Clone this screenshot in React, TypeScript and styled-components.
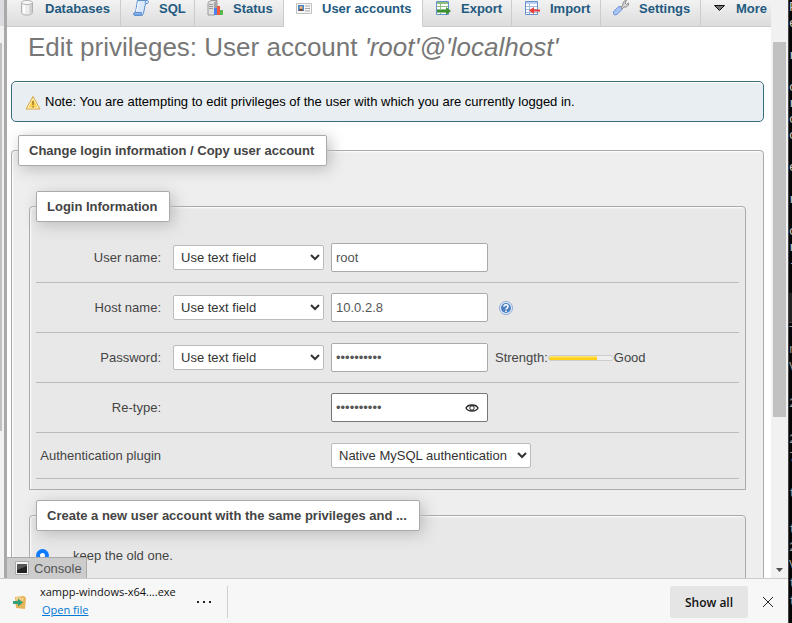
import React from "react";
import styled, { createGlobalStyle, css } from "styled-components";

const GlobalStyle = createGlobalStyle`
  *, *::before, *::after { box-sizing: border-box; }
  body {
    margin: 0;
    overflow: hidden;
    background: #000;
    font-family: "Liberation Sans", Arial, sans-serif;
    font-size: 13px;
    line-height: 17px;
    color: #444;
  }
  button, input, select { font: inherit; color: inherit; margin: 0; }
`;

const Screen = styled.div`
  display: grid;
  grid-template-columns: minmax(0, 1fr) 4px;
  height: 100vh;
`;

const Browser = styled.div`
  display: flex;
  flex-direction: column;
  min-width: 0;
  min-height: 0;
  background: #fff;
`;

const Viewport = styled.div`
  position: relative;
  flex: 1;
  display: grid;
  grid-template-columns: 4px 3px minmax(0, 1fr) 17px;
  min-height: 0;
`;

const NavEdge = styled.div`
  display: grid;
  grid-template-columns: 2px 2px;
  grid-template-rows: 26px 17px 388px;
  background: #f1f1f1;
`;

const NavTop = styled.div`
  grid-column: 1 / 3;
  background: #dcdce0;
`;

const NavThumb = styled.div`
  grid-row: 3;
  background: #c1c1c1;
`;

const Divider = styled.div`
  background: #a9a9a9;
`;

const Content = styled.main`
  min-width: 0;
  overflow: hidden;
`;

const Scrollbar = styled.div`
  display: flex;
  flex-direction: column;
  align-items: center;
  padding-top: 42px;
  background: #f1f1f1;
`;

const ScrollThumb = styled.div`
  width: 13px;
  height: 375px;
  background: #c1c1c1;
`;

const ScrollArrow = styled.svg`
  margin-top: auto;
  margin-bottom: 6px;
`;

const TabBar = styled.nav`
  display: grid;
  grid-template-columns: 114px 74px 89px 139px 89px 89px 100px 1fr;
  height: 27px;
  overflow: hidden;
`;

const Tab = styled.a<{ $active?: boolean }>`
  display: flex;
  gap: 10px;
  padding-left: 12px;
  border-right: 1px solid #ccc;
  border-bottom: 1px solid #ccc;
  background: linear-gradient(#f2f2f2, #dcdcdc);
  color: #235a81;
  font-weight: bold;
  text-decoration: none;
  white-space: nowrap;
  &:last-child { border-right: 0; }
  ${(p) => p.$active && css`
    border-bottom-color: #fff;
    background: #fff;
  `}
`;

const Title = styled.h2`
  margin: 5px 0 0 21px;
  font-size: 26px;
  line-height: 30px;
  font-weight: normal;
  color: #777;
  white-space: nowrap;
`;

const Notice = styled.div`
  display: flex;
  align-items: center;
  gap: 4px;
  height: 41px;
  margin: 19px 7px 13px 4px;
  padding: 0 13px;
  border: 1px solid #3a6c7e;
  border-radius: 5px;
  background: #e8eef1;
  box-shadow: 0 1px 1px #fff inset;
  color: #000;
`;

const Fieldset = styled.fieldset<{ $nested?: boolean; $tall?: boolean }>`
  min-width: 0;
  margin: 0 7px 0 4px;
  padding: 0 6px 10px;
  border: 1px solid #aaa;
  border-radius: 4px 4px 0 0;
  background: #eee;
  box-shadow: 1px 1px 2px #fff inset;
  ${(p) => p.$nested && css`
    margin: 0 11px 10px;
    background: #e8e8e8;
  `}
  ${(p) => p.$tall && css`
    min-height: 160px;
  `}
`;

const Legend = styled.legend<{ $gap: number }>`
  margin-bottom: ${(p) => p.$gap}px;
  padding: 6px 12px 6px 10px;
  border: 1px solid #aaa;
  border-radius: 2px;
  background: #fff;
  box-shadow: 3px 3px 15px #bbb;
  font-weight: bold;
  white-space: nowrap;
`;

const Row = styled.div`
  display: grid;
  grid-template-columns: 130px 151px 157px 1fr;
  column-gap: 7px;
  align-items: center;
  padding: 10px 0;
  border-bottom: 1px solid #bbb;
`;

const Label = styled.label`
  padding-right: 5px;
  text-align: right;
  white-space: nowrap;
`;

const SelectBox = styled.span<{ $wide?: boolean }>`
  position: relative;
  display: block;
  ${(p) => p.$wide && css`
    grid-column: 3 / 5;
    width: 200px;
  `}
`;

const Select = styled.select`
  display: block;
  width: 100%;
  height: 25px;
  padding: 0 20px 0 7px;
  border: 1px solid #bbb;
  border-radius: 2px;
  background: #fff;
  color: #333;
  appearance: none;
`;

const Chevron = styled.svg`
  position: absolute;
  top: 9px;
  right: 4px;
  pointer-events: none;
`;

const InputBox = styled.span`
  position: relative;
  display: block;
  grid-column: 3;
`;

const Input = styled.input<{ $focused?: boolean }>`
  display: block;
  width: 100%;
  height: 29px;
  padding: 0 4px;
  border: 1px solid ${(p) => (p.$focused ? "#777" : "#aaa")};
  border-radius: 2px;
  background: #fff;
  color: #555;
  outline: 0;
`;

const Reveal = styled.button`
  position: absolute;
  top: 9px;
  right: 9px;
  display: flex;
  padding: 0;
  border: 0;
  background: none;
`;

const Extra = styled.span`
  display: flex;
  align-items: center;
`;

const HelpLink = styled.a`
  display: flex;
  margin-left: 3px;
`;

const Meter = styled.span`
  display: block;
  width: 66px;
  height: 6px;
  border: 1px solid #ccc;
  border-radius: 3px;
  background: #eee;
`;

const MeterFill = styled.span`
  display: block;
  height: 4px;
  border-radius: 2px 0 0 2px;
  background: linear-gradient(#fbe88c, #fcd116 60%);
`;

const Choice = styled.label`
  display: flex;
  align-items: center;
  gap: 24px;
`;

const Radio = styled.input`
  width: 13px;
  height: 13px;
  border: 4px solid #0f7bff;
  border-radius: 50%;
  background: #fff;
  appearance: none;
`;

const ConsoleTab = styled.button`
  position: absolute;
  bottom: 0;
  left: 7px;
  display: flex;
  align-items: center;
  gap: 5px;
  height: 21px;
  padding: 0 4px 0 8px;
  border: solid #aaa;
  border-width: 1px 1px 0 0;
  background: #ccc;
  color: #555;
`;

const DownloadBar = styled.footer`
  display: flex;
  align-items: center;
  height: 45px;
  padding: 2px 14px 0 12px;
  border-top: 1px solid #ccc;
  background: #f7f7f7;
  color: #111;
  font-family: "Open Sans", "Noto Sans", sans-serif;
  font-size: 12px;
`;

const FileInfo = styled.div`
  display: flex;
  flex-direction: column;
  width: 141px;
  margin-left: 13px;
  padding-bottom: 2px;
  font-size: 11px;
  line-height: 18px;
  white-space: nowrap;
`;

const FileLink = styled.a`
  margin-left: 2px;
  color: #0078d4;
`;

const MoreButton = styled.button`
  display: flex;
  margin-left: 15px;
  padding: 4px 0;
  border: 0;
  background: none;
`;

const Separator = styled.div`
  width: 1px;
  height: 32px;
  margin-left: 15px;
  background: #d0d0d0;
`;

const ShowAll = styled.button`
  width: 78px;
  height: 32px;
  margin-left: auto;
  padding: 0;
  border: 0;
  border-radius: 2px;
  background: #e5e5e5;
  font-weight: 600;
`;

const CloseButton = styled.button`
  display: flex;
  margin-left: 14px;
  padding: 0;
  border: 0;
  background: none;
`;

const Terminals = styled.div`
  display: grid;
  grid-template-rows: 293px 30px minmax(0, 1fr);
  border-left: 1px solid #444;
  overflow: hidden;
  background: #0c0c0c;
`;

const TerminalBar = styled.div`
  background: #222;
  border-bottom: 1px solid #444;
`;

const TerminalText = styled.pre<{ $pitch: number; $color: string }>`
  margin: 0;
  overflow: hidden;
  background: #050505;
  color: ${(p) => p.$color};
  font-family: "Liberation Mono", monospace;
  font-size: 13px;
  line-height: ${(p) => p.$pitch}px;
`;

const iconBox = { width: 16, height: 16, viewBox: "0 0 16 16" };

const DatabaseIcon = () => (
  <svg {...iconBox} fill="none">
    <path d="M2.500 2.500v10c0 3.500 11 3.500 11 0v-10" fill="#ececec" stroke="#b0b0b0" />
    <path d="M10.500 4v11c2-.5 2.500-1 2.500-2V3z" fill="#cfcfcf" />
    <ellipse cx="8" cy="2.500" rx="5.500" ry="2" fill="#f8f8f8" stroke="#b5b5b5" />
    <path d="M5 5.500v8" stroke="#fff" strokeWidth="2" />
  </svg>
);
const SqlIcon = () => (
  <svg {...iconBox} strokeLinejoin="round">
    <path d="M4.500.5H14c2 0 2 3 0 3h-1.500L10.500 13c-.3 2-2 2.500-3 2.500H2c-2 0-2-3 0-3h.500z" fill="#d9e8fb" stroke="#5b8fd0" />
    <path d="M13 1c-1 .5-1 2 0 2.500" fill="none" stroke="#5b8fd0" />
    <path d="M1.500 12.500h7c-.5 1 0 2.500 1 2.500H2c-1 0-1.500-1.500-.5-2.500z" fill="#8fb8ec" stroke="#5b8fd0" />
    <path d="M5.500 2l-2 9.500" stroke="#fff" />
  </svg>
);
const StatusIcon = () => (
  <svg {...iconBox}>
    <path d="M1 2.500L4 .5h6v13l-3 1.500H1z" fill="#e0e0e0" stroke="#9a9a9a" />
    <path d="M7 2.500l3-2v13L7 15z" fill="#a5a5a5" />
    <path d="M2 4.500h4M2 6.500h4M2 8.500h4" stroke="#999" />
    <path d="M7 8h3v7H7z" fill="#4a83ed" />
    <path d="M10 6h3v9h-3z" fill="#f25a3c" />
    <path d="M13 10h3v5h-3z" fill="#55b94c" />
  </svg>
);
const UsersIcon = () => (
  <svg {...iconBox}>
    <path d="M.5 3.500h15v10H.5z" fill="#f7f7f7" stroke="#c2c2c2" />
    <path d="M2 5h6v6H2z" fill="#4b87c9" />
    <circle cx="5" cy="7.500" r="1.500" fill="#f0b57b" />
    <path d="M3 11c0-3 4-3 4 0z" fill="#7a4a2a" />
    <path d="M9 6h5M9 8.500h5M9 11h5" stroke="#aaa" />
  </svg>
);
const TableArrowIcon = ({ incoming = false }: { incoming?: boolean }) => (
  <svg {...iconBox}>
    <path d="M1.500 1.500h12v13h-12z" fill="#fff" stroke="#6592cf" />
    <path d="M2 2h11v2H2z" fill={incoming ? "#b9cfee" : "#8ebd7c"} />
    <path d="M2 6.500h11M2 9.500h11M2 12.500h11M5.500 4v10" stroke={incoming ? "#a3bbe0" : "#8fbf86"} />
    {incoming ? (
      <path d="M16 9.500v2h-6V14l-5-3.500L10 7v2.500z" fill="#e8403a" />
    ) : (
      <path d="M2 10h9V7l5 4-5 4v-3H2z" fill="#3e8e33" />
    )}
  </svg>
);
const WrenchIcon = () => (
  <svg {...iconBox}>
    <path d="M1 14.500C-.5 12.500 1 11 2 10l4-3.500c2-.5 3.500 1 3 3L5 13.500c-1 1-3 2-4 1z" fill="#a7c4f4" stroke="#6a93dc" />
    <path d="M8 7l2-2c-.5-2.500 1-4.500 3.500-4.500L12 3l1.500 1.500L15.500 3c.5 3-2 4.500-4.500 4l-2 2z" fill="#d5d5d5" stroke="#8a8a8a" />
  </svg>
);
const MoreIcon = () => (
  <svg width="13" height="16" viewBox="1 0 13 16">
    <path d="M2.500 5.500h10l-5 5z" fill="#777" stroke="#111" />
  </svg>
);
const WarningIcon = () => (
  <svg {...iconBox}>
    <path d="M8 2.500L15 15H1z" fill="#fff6cf" stroke="#dca03a" strokeLinejoin="round" />
    <path d="M8 5l4.500 8.500h-9z" fill="#fbd04a" />
    <path d="M8 7v4M8 12v1.500" stroke="#a07a2a" strokeWidth="1.500" />
  </svg>
);
const HelpIcon = () => (
  <svg {...iconBox} fill="none">
    <circle cx="8" cy="8" r="6.500" fill="#e4eefa" stroke="#8fadd6" />
    <circle cx="8" cy="8" r="5" fill="#4d80bf" />
    <path d="M6 6.800c0-2.600 4-2.600 4 0 0 1.300-2 1.300-2 2.700M8 10.500V12" stroke="#fff" strokeWidth="1.500" />
  </svg>
);
const Arrow = () => (
  <Chevron width="10" height="7" viewBox="0 0 10 7" fill="none">
    <path d="M1 1l4 4 4-4" stroke="#333" strokeWidth="2" />
  </Chevron>
);

const tabs = [
  { label: "Databases", icon: <DatabaseIcon /> },
  { label: "SQL", icon: <SqlIcon /> },
  { label: "Status", icon: <StatusIcon /> },
  { label: "User accounts", icon: <UsersIcon />, active: true },
  { label: "Export", icon: <TableArrowIcon /> },
  { label: "Import", icon: <TableArrowIcon incoming /> },
  { label: "Settings", icon: <WrenchIcon /> },
  { label: "More", icon: <MoreIcon /> },
];

const upperLines = ["F", "e", "", "r", "", "c", "r", "c", "c", "", "e", "", "r", "", "c", "r", "-"];
const lowerLines = ["T", "n", "V", "", "2", "", "2", "7", "", "t", "", "t", "2", "V", "t", "t"];

const TextFieldSelect = ({ name }: { name: string }) => (
  <SelectBox>
    <Select aria-label={name}>
      <option>Use text field</option>
    </Select>
    <Arrow />
  </SelectBox>
);

export default function App() {
  return (
    <Screen>
      <GlobalStyle />
      <Browser>
        <Viewport>
          <NavEdge><NavTop /><NavThumb /></NavEdge>
          <Divider />
          <Content>
            <TabBar>
              {tabs.map((t) => (
                <Tab key={t.label} href="#" $active={t.active}>
                  {t.icon}
                  {t.label}
                </Tab>
              ))}
            </TabBar>
            <Title>Edit privileges: User account <i>'root'@'localhost'</i></Title>
            <Notice>
              <WarningIcon />
              Note: You are attempting to edit privileges of the user with which you are currently logged in.
            </Notice>
            <Fieldset>
              <Legend $gap={25}>Change login information / Copy user account</Legend>
              <Fieldset $nested>
                <Legend $gap={11}>Login Information</Legend>
                <Row>
                  <Label htmlFor="user">User name:</Label>
                  <TextFieldSelect name="User name type" />
                  <InputBox><Input id="user" defaultValue="root" /></InputBox>
                </Row>
                <Row>
                  <Label htmlFor="host">Host name:</Label>
                  <TextFieldSelect name="Host name type" />
                  <InputBox><Input id="host" defaultValue="10.0.2.8" /></InputBox>
                  <Extra><HelpLink href="#" aria-label="Help"><HelpIcon /></HelpLink></Extra>
                </Row>
                <Row>
                  <Label htmlFor="password">Password:</Label>
                  <TextFieldSelect name="Password type" />
                  <InputBox><Input id="password" type="password" defaultValue="abcdefghij" /></InputBox>
                  <Extra>
                    Strength:
                    <Meter><MeterFill style={{ width: "75%" }} /></Meter>
                    Good
                  </Extra>
                </Row>
                <Row>
                  <Label htmlFor="retype">Re-type:</Label>
                  <InputBox>
                    <Input id="retype" type="password" defaultValue="abcdefghij" $focused />
                    <Reveal aria-label="Show password">
                      <svg width="14" height="12" viewBox="0 0 14 12" fill="none" stroke="#222">
                        <path d="M1 6c2-4 10-4 12 0-2 4-10 4-12 0z" strokeWidth="1.300" />
                        <circle cx="7" cy="6" r="2.200" />
                      </svg>
                    </Reveal>
                  </InputBox>
                </Row>
                <Row>
                  <Label htmlFor="plugin">Authentication plugin</Label>
                  <SelectBox $wide>
                    <Select id="plugin"><option>Native MySQL authentication</option></Select>
                    <Arrow />
                  </SelectBox>
                </Row>
              </Fieldset>
              <Fieldset $nested $tall>
                <Legend $gap={16}>Create a new user account with the same privileges and ...</Legend>
                <Choice><Radio type="radio" name="mode" defaultChecked />keep the old one.</Choice>
              </Fieldset>
            </Fieldset>
          </Content>
          <Scrollbar>
            <ScrollThumb />
            <ScrollArrow width="7" height="4" viewBox="0 0 7 4"><path d="M0 0h7L3.500 4z" fill="#505050" /></ScrollArrow>
          </Scrollbar>
          <ConsoleTab>
            <svg width="14" height="14" viewBox="0 0 14 14">
              <path d="M.5.5h13v13H.5z" fill="#f4f4f4" stroke="#aaa" />
              <path d="M2 3h10v9H2z" fill="#222" />
              <path d="M2 3h10v2L2 9z" fill="#555" />
            </svg>
            Console
          </ConsoleTab>
        </Viewport>
        <DownloadBar>
          <svg width="15" height="15" viewBox="0 0 15 15">
            <path d="M3 2l9-1 2 2-1 11-9-1z" fill="#e8b45a" />
            <path d="M4 2l8 1-1 3-7-1z" fill="#f4cf86" />
            <path d="M1 6h5V3.500L11 7.500 6 11.500V9H1z" fill="#35a07c" />
          </svg>
          <FileInfo>
            xampp-windows-x64....exe
            <FileLink href="#">Open file</FileLink>
          </FileInfo>
          <MoreButton aria-label="More actions">
            <svg width="16" height="4" viewBox="0 0 16 4"><path d="M1 1h2v2H1zM7 1h2v2H7zM13 1h2v2h-2z" fill="#222" /></svg>
          </MoreButton>
          <Separator />
          <ShowAll>Show all</ShowAll>
          <CloseButton aria-label="Close">
            <svg width="12" height="12" viewBox="0 0 12 12"><path d="M1 1l10 10M11 1L1 11" stroke="#222" /></svg>
          </CloseButton>
        </DownloadBar>
      </Browser>
      <Terminals>
        <TerminalText $pitch={16} $color="#ccc">{upperLines.join("\n")}</TerminalText>
        <TerminalBar />
        <TerminalText $pitch={18} $color="#999">{lowerLines.join("\n")}</TerminalText>
      </Terminals>
    </Screen>
  );
}
